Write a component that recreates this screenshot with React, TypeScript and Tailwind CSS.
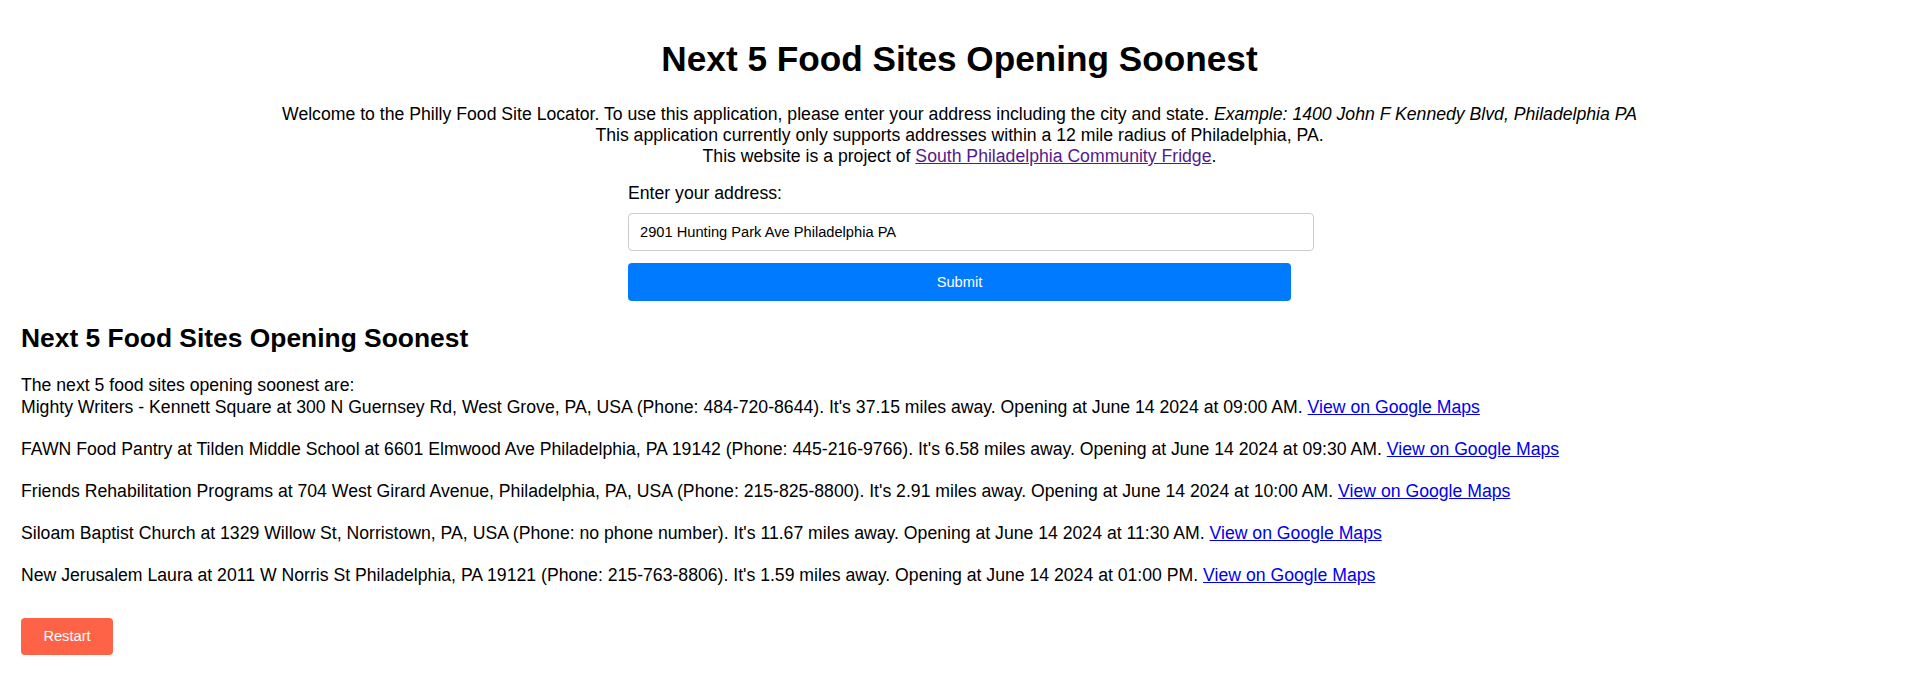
import React from 'react';

const sites = [
  {
    text: "Mighty Writers - Kennett Square at 300 N Guernsey Rd, West Grove, PA, USA (Phone: 484-720-8644). It's 37.15 miles away. Opening at June 14 2024 at 09:00 AM.",
  },
  {
    text: "FAWN Food Pantry at Tilden Middle School at 6601 Elmwood Ave Philadelphia, PA 19142 (Phone: 445-216-9766). It's 6.58 miles away. Opening at June 14 2024 at 09:30 AM.",
  },
  {
    text: "Friends Rehabilitation Programs at 704 West Girard Avenue, Philadelphia, PA, USA (Phone: 215-825-8800). It's 2.91 miles away. Opening at June 14 2024 at 10:00 AM.",
  },
  {
    text: "Siloam Baptist Church at 1329 Willow St, Norristown, PA, USA (Phone: no phone number). It's 11.67 miles away. Opening at June 14 2024 at 11:30 AM.",
  },
  {
    text: "New Jerusalem Laura at 2011 W Norris St Philadelphia, PA 19121 (Phone: 215-763-8806). It's 1.59 miles away. Opening at June 14 2024 at 01:00 PM.",
  },
];

const App = () => {
  return (
    <div className="min-h-screen bg-white text-black font-['Liberation_Sans',Arial,sans-serif] text-[17.65px] leading-[21px]">
      <div className="pt-[39px] flex flex-col items-center">
        <h1 className="text-[35.2px] leading-[40px] font-bold">Next 5 Food Sites Opening Soonest</h1>

        <div className="mt-[25px] text-center">
          <p>
            Welcome to the Philly Food Site Locator. To use this application, please enter your address including the city and state.{' '}
            <em>Example: 1400 John F Kennedy Blvd, Philadelphia PA</em>
          </p>
          <p>This application currently only supports addresses within a 12 mile radius of Philadelphia, PA.</p>
          <p>
            This website is a project of{' '}
            <a href="#" className="text-[#551a8b] underline">South Philadelphia Community Fridge</a>.
          </p>
        </div>

        <form className="mt-[16px] w-[663px] flex flex-col" onSubmit={(e) => e.preventDefault()}>
          <label className="block">Enter your address:</label>
          <input
            type="text"
            defaultValue="2901 Hunting Park Ave Philadelphia PA"
            className="mt-[9px] w-[686px] h-[38px] px-[11px] text-[14.67px] border border-[#cccccc] rounded-[4px] outline-none"
          />
          <button
            type="submit"
            className="mt-[12px] w-[663px] h-[38px] bg-[#007bff] text-white text-[14.67px] rounded-[4px]"
          >
            Submit
          </button>
        </form>
      </div>

      <div className="pl-[21px] pr-5 mt-[22px]">
        <h2 className="text-[26.4px] leading-[30px] font-bold">Next 5 Food Sites Opening Soonest</h2>

        <div className="mt-[21px] leading-[22px]">
          <div>The next 5 food sites opening soonest are:</div>
          <div className="flex flex-col gap-[20px]">
            {sites.map((site, i) => (
              <div key={i}>
                {site.text}{' '}
                <a href="#" className="text-[#0000ee] underline">View on Google Maps</a>
              </div>
            ))}
          </div>
        </div>

        <button className="mt-[32px] w-[92px] h-[37px] bg-[#ff6347] text-white text-[14.67px] rounded-[4px]">
          Restart
        </button>
      </div>
    </div>
  );
};

export default App;
